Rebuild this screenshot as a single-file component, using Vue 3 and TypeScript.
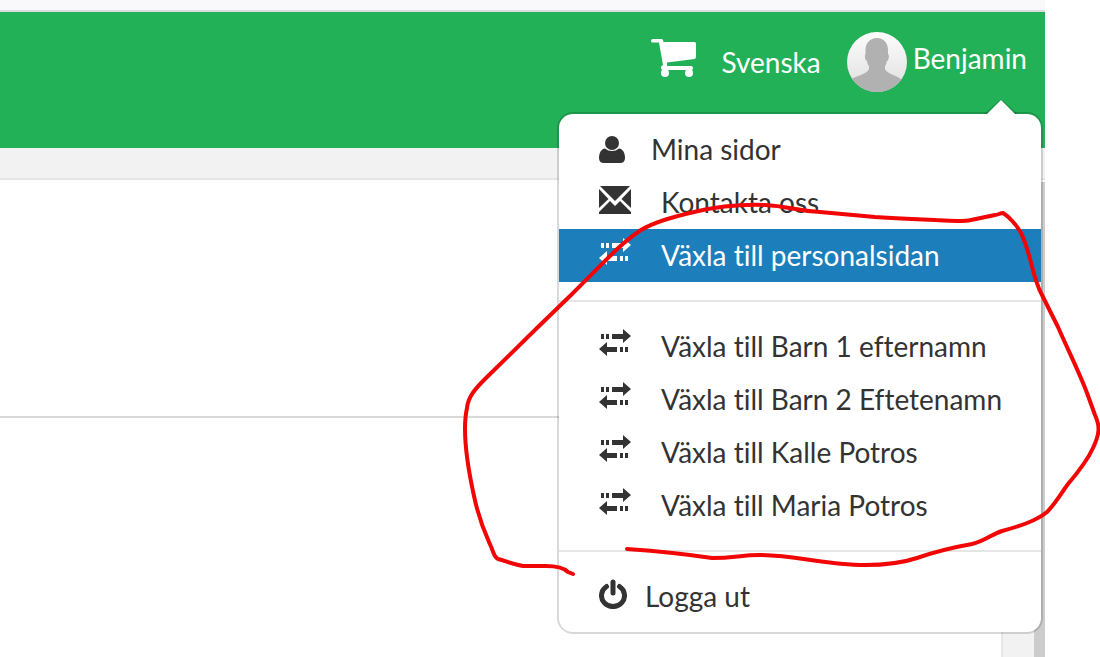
<script setup lang="ts">
type IconName = 'user' | 'mail' | 'swap' | 'power'

interface MenuEntry {
  label: string
  icon: IconName
  active?: boolean
}

const groups: MenuEntry[][] = [
  [
    { label: 'Mina sidor', icon: 'user' },
    { label: 'Kontakta oss', icon: 'mail' },
    { label: 'Växla till personalsidan', icon: 'swap', active: true },
  ],
  [
    { label: 'Växla till Barn 1 efternamn', icon: 'swap' },
    { label: 'Växla till Barn 2 Eftetenamn', icon: 'swap' },
    { label: 'Växla till Kalle Potros', icon: 'swap' },
    { label: 'Växla till Maria Potros', icon: 'swap' },
  ],
  [{ label: 'Logga ut', icon: 'power' }],
]
</script>

<template>
  <div class="canvas">
    <div class="page">
      <div class="strip"></div>
      <header class="header">
        <a href="#" class="cart" aria-label="Kundvagn">
          <svg viewBox="0 0 46 38" width="46" height="38" fill="currentColor">
            <path d="M1.500 0H10.500Q11.500 0 12 1L12.500 3H43.500Q45 3 45 4.500V18Q45 19.500 43.500 20L16 23.500V27H40Q42 27 42 29T40.500 31H12Q10 31 10 29V27.500L12 26L8 3.500H1.500Q0 3.500 0 2T1.500 0Z" />
            <circle cx="14" cy="34" r="4" />
            <circle cx="38" cy="34" r="4" />
          </svg>
        </a>
        <a href="#" class="language">Svenska</a>
        <div class="account">
          <button type="button" class="account-button" aria-expanded="true">
            <svg class="avatar" viewBox="0 0 60 60" width="60" height="60">
              <defs>
                <linearGradient id="avatar-bg" x1="0" y1="0" x2="0" y2="1">
                  <stop offset="0" stop-color="#fdfdfd" />
                  <stop offset="1" stop-color="#dedee0" />
                </linearGradient>
                <clipPath id="avatar-clip"><circle cx="30" cy="30" r="30" /></clipPath>
              </defs>
              <g clip-path="url(#avatar-clip)">
                <rect width="60" height="60" fill="url(#avatar-bg)" />
                <path fill="#b1b1b1" d="M30 6C37 6 41 11 41 18V22Q42.500 23 41.500 27Q41 29 40 29Q39.500 32 38 34V37Q39 40 46 43Q54 46 57 50V60H3V48Q5 46 14 43Q21 40 22 37V34Q20 32 20 29Q18.500 29 18 26Q17.500 23 18.500 22V18C18.500 11 23 6 30 6Z" />
              </g>
            </svg>
            <span class="account-name">Benjamin</span>
          </button>

          <nav class="menu" aria-label="Konto">
            <svg class="menu-tip" viewBox="0 0 34 17" width="34" height="17">
              <path d="M0 15L17 0L34 15Z" fill="#000" fill-opacity=".15" />
              <path d="M2 17V16L17 1L32 16V17Z" fill="#fff" />
            </svg>
            <ul v-for="(group, g) in groups" :key="g" class="menu-group">
              <li v-for="entry in group" :key="entry.label">
                <a href="#" class="menu-link" :class="{ active: entry.active }">
                  <span class="menu-icon" :class="entry.icon">
                    <svg v-if="entry.icon === 'user'" viewBox="0 0 26 28" width="26" height="28" fill="currentColor">
                      <path d="M6 12.500C2 13 0 17 0 22Q0 27 5 27H21Q26 27 26 22C26 17 24 13 20 12.500Q17 15 13 15T6 12.500Z" />
                      <circle cx="13" cy="7" r="7" />
                    </svg>
                    <svg v-else-if="entry.icon === 'mail'" viewBox="0 0 32 28" width="32" height="28" fill="currentColor">
                      <path d="M1 0H31L20 11L16 15L12 11Z" />
                      <path d="M0 3L9.500 13L0 22Z" />
                      <path d="M32 3L22.500 13L32 22Z" />
                      <path d="M0 28V26L11 15L16 20L21 15L32 26V28Z" />
                    </svg>
                    <svg v-else-if="entry.icon === 'swap'" viewBox="0 0 32 28" width="32" height="28" fill="currentColor">
                      <path d="M2 5H5V10H2ZM7 5H10V10H7ZM13 5H24V0L32 7L24 14V10H13Z" />
                      <path d="M0 20L8 13V18H18V23H8V27ZM21 18H24V23H21ZM26 18H29V23H26Z" />
                    </svg>
                    <svg v-else viewBox="0 0 28 30" width="28" height="30" fill="none" stroke="currentColor" stroke-width="5" stroke-linecap="round">
                      <path d="M14 3V14" />
                      <path d="M7.500 7.500A11.500 11 0 1 0 20.500 7.500" />
                    </svg>
                  </span>
                  <span>{{ entry.label }}</span>
                </a>
              </li>
            </ul>
          </nav>
        </div>
      </header>
      <div class="subheader"></div>
      <main class="body">
        <div class="content"><div class="section"></div></div>
        <div class="gutter"></div>
        <div class="scroll-thumb"></div>
      </main>
    </div>

    <svg class="marking" viewBox="0 0 1100 657" aria-hidden="true">
      <path d="M627 549C655 551 692 555 712 558C735 558 740 555 760 555C795 555 825 565 865 565C890 565 905 562 917 558C940 550 955 547 972 544C985 541 990 535 1002 531C1020 526 1036 521 1047 512C1055 504 1060 495 1068 484C1080 470 1088 459 1093 448C1100 433 1100 426 1095 415L1087 393C1080 374 1068 350 1058 327L1042 295C1032 277 1031 253 1021 233C1016 224 1008 216 1003 213C1000 213 998 215 995 215L971 220C962 222 951 221 935 220C910 219 890 218 875 217L820 212C798 211 787 206 765 205C735 204 715 207 694 212C672 217 654 222 641 230C618 245 598 269 570 296L538 327L485 379C475 389 468 397 467 408C462 430 467 464 474 496C480 525 488 539 492 549C494 554 494 557 498 559C506 561 512 564 523 566H546C558 566 565 569 568 572L573 574" />
    </svg>
  </div>
</template>

<style>
body {
  margin: 0;
  background: #fff;
}
</style>

<style scoped>
.canvas {
  position: relative;
  min-height: 100vh;
  overflow: hidden;
  font-family: Lato, 'Open Sans', sans-serif;
  font-size: 28px;
  font-variant-ligatures: none;
  line-height: 53px;
  color: #333;
}

.page {
  display: flex;
  flex-direction: column;
  min-height: 100vh;
  margin-right: 55px;
}

.strip {
  height: 10px;
  background: #f9f9fb;
  border-bottom: 2px solid #dcdcde;
}

.header {
  display: flex;
  justify-content: flex-end;
  align-items: flex-start;
  box-sizing: border-box;
  min-height: 136px;
  padding: 20px 18px 0 0;
  background: #22b157;
  color: #fff;
}

.cart {
  display: flex;
  margin: 7px 24px 0 0;
  color: inherit;
}

.language {
  margin-right: 26px;
  color: inherit;
  line-height: 60px;
  text-decoration: none;
}

.account {
  position: relative;
}

.account-button {
  display: flex;
  gap: 6px;
  padding: 0;
  border: 0;
  background: none;
  color: inherit;
  font: inherit;
}

.account-name {
  line-height: 53px;
}

.menu {
  position: absolute;
  top: 80px;
  right: -16px;
  z-index: 1;
  width: 482px;
  padding: 9px 0;
  border: 2px solid rgba(0, 0, 0, 0.15);
  border-radius: 16px;
  background: #fff;
  background-clip: padding-box;
  color: #333;
}

.menu-tip {
  position: absolute;
  top: -15px;
  right: 23px;
}

.menu-group {
  margin: 0;
  padding: 0;
  list-style: none;
}

.menu-group + .menu-group {
  margin-top: 18px;
  padding-top: 18px;
  border-top: 2px solid #e5e5e5;
}

.menu-link {
  display: flex;
  height: 53px;
  padding-left: 40px;
  color: inherit;
  text-decoration: none;
  white-space: nowrap;
}

.menu-link.active {
  background: #1c7ebb;
  color: #fff;
}

.menu-icon {
  flex: none;
  width: 62px;
  padding-top: 9px;
  line-height: 0;
}

.menu-icon.mail {
  padding-top: 10px;
}

.menu-icon.user {
  width: 52px;
  padding-top: 13px;
}

.menu-icon.power {
  width: 46px;
}

.subheader {
  height: 30px;
  background: #f2f2f2;
  border-bottom: 2px solid #e6e6e6;
}

.body {
  display: flex;
  flex: 1;
  padding-top: 2px;
}

.content {
  flex: 1;
}

.section {
  height: 234px;
  border-bottom: 2px solid #d9d9d9;
}

.gutter {
  width: 31px;
  border-left: 2px solid #e6e6e6;
  background: #f2f2f2;
}

.scroll-thumb {
  width: 11px;
  background: #ccc;
}

.marking {
  position: absolute;
  top: 0;
  left: 0;
  z-index: 2;
  width: 100%;
  fill: none;
  stroke: #f20505;
  stroke-width: 4;
  stroke-linecap: round;
  stroke-linejoin: round;
  pointer-events: none;
}
</style>
